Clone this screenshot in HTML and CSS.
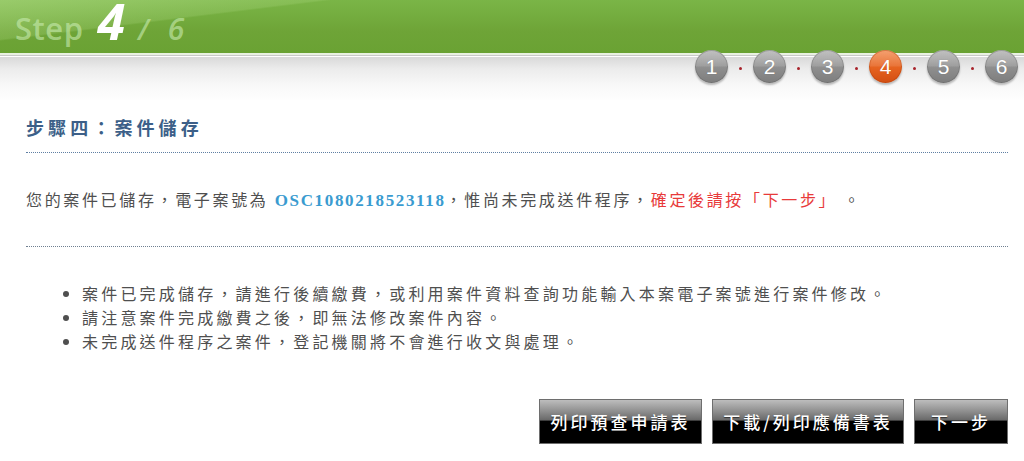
FILE: index.html
```html
<!DOCTYPE html>
<html lang="zh-Hant">
<head>
<meta charset="utf-8">
<title>Step 4 / 6</title>
<link rel="stylesheet" href="styles.css">
</head>
<body>
<header class="top">
  <div class="band">
    <div class="step-title">
      <span class="st-word">Step</span>
      <span class="st-cur">4</span>
      <span class="st-sep">/</span>
      <span class="st-total">6</span>
    </div>
  </div>
  <div class="steps">
    <span class="ball">1</span><span class="dot"></span>
    <span class="ball">2</span><span class="dot"></span>
    <span class="ball">3</span><span class="dot"></span>
    <span class="ball active">4</span><span class="dot"></span>
    <span class="ball">5</span><span class="dot"></span>
    <span class="ball">6</span>
  </div>
</header>
<main class="content">
  <h1 class="heading">步驟四：案件儲存</h1>
  <p class="msg">您的案件已儲存，電子案號為 <span class="case-no">OSC1080218523118</span>，惟尚未完成送件程序，<span class="warn">確定後請按「下一步」</span> 。</p>
  <ul class="notes">
    <li>案件已完成儲存，請進行後續繳費，或利用案件資料查詢功能輸入本案電子案號進行案件修改。</li>
    <li>請注意案件完成繳費之後，即無法修改案件內容。</li>
    <li>未完成送件程序之案件，登記機關將不會進行收文與處理。</li>
  </ul>
  <div class="actions">
    <button class="btn b1">列印預查申請表</button>
    <button class="btn b2">下載/列印應備書表</button>
    <button class="btn b3">下一步</button>
  </div>
</main>
</body>
</html>
```
FILE: styles.css
```css
* { box-sizing: border-box; }
html, body { margin: 0; padding: 0; background: #fff; }
body {
  width: 1024px;
  height: 461px;
  overflow: hidden;
  font-family: "Noto Sans CJK TC", "Noto Sans", sans-serif;
}
.top {
  height: 100px;
  display: flex;
  flex-direction: column;
  background:
    linear-gradient(180deg, #d9d9d9 0px, #ececec 12px, #f8f8f8 28px, #ffffff 45px) 0 57px / 100% 45px no-repeat,
    #fff;
}
.band {
  height: 55px;
  flex: none;
  background:
    linear-gradient(173deg, rgba(190,230,150,0.45) 0%, rgba(190,230,150,0.2) 22%, rgba(255,255,255,0) 23%),
    linear-gradient(180deg, #7ab547 0%, #6ea437 60%, #6aa233 100%);
  border-bottom: 2px solid #e9f1e2;
  box-shadow: 0 1px 0 #c9c9c9;
}
.step-title {
  display: flex;
  align-items: baseline;
  padding-left: 15px;
  font-family: "Open Sans", "DejaVu Sans", sans-serif;
}
.st-word {
  font-size: 31px;
  line-height: 1;
  font-weight: 600;
  color: rgba(200,235,175,0.62);
  letter-spacing: 0.5px;
}
.st-cur {
  font-size: 50px;
  line-height: 42px;
  font-weight: 700;
  font-style: italic;
  color: #fff;
  margin-left: 14px;
}
.st-sep {
  font-size: 28px;
  line-height: 1;
  font-style: italic;
  font-weight: 600;
  color: rgba(200,235,175,0.62);
  margin-left: 13px;
}
.st-total {
  font-size: 30px;
  line-height: 1;
  font-style: italic;
  font-weight: 600;
  color: rgba(200,235,175,0.62);
  margin-left: 19px;
}
.steps {
  display: flex;
  align-items: center;
  justify-content: flex-end;
  padding-right: 6px;
  margin-top: -5px;
  height: 33px;
}
.ball {
  width: 33px;
  height: 33px;
  border-radius: 50%;
  display: flex;
  align-items: center;
  justify-content: center;
  font-family: "Liberation Sans", Arial, sans-serif;
  font-size: 21px;
  color: #fff;
  background:
    linear-gradient(180deg, rgba(255,255,255,0.28) 0%, rgba(255,255,255,0.12) 48%, rgba(0,0,0,0) 52%),
    linear-gradient(180deg, #a9a9a9 0%, #8e8e8e 55%, #7d7d7d 100%);
  box-shadow: 0 2px 2px rgba(0,0,0,0.25), inset 0 0 0 1px rgba(90,90,90,0.35);
  text-shadow: 0 0 1px rgba(0,0,0,0.2);
}
.ball.active {
  background:
    linear-gradient(180deg, rgba(255,255,255,0.25) 0%, rgba(255,255,255,0.1) 48%, rgba(0,0,0,0) 52%),
    linear-gradient(180deg, #f08040 0%, #e5621f 55%, #d24e12 100%);
  box-shadow: 0 2px 2px rgba(0,0,0,0.25), inset 0 0 0 1px rgba(170,60,10,0.4);
}
.dot {
  width: 3px;
  height: 3px;
  border-radius: 50%;
  background: #a8232b;
  margin: 4px 11px 0 11px;
}
.content {
  padding: 0 16px 0 26px;
  color: #555;
}
.heading {
  margin: 0;
  padding: 14px 0 12px;
  line-height: 26px;
  font-size: 18px;
  font-weight: 700;
  letter-spacing: 4.1px;
  color: #3c5f88;
  border-bottom: 1px dotted #5f7fa3;
}
.msg {
  margin: 0;
  padding: 34px 0 33px;
  line-height: 24px;
  font-size: 16px;
  letter-spacing: 2.65px;
  color: #4f4f4f;
  border-bottom: 1px dotted #6f7f90;
}
.case-no {
  font-family: "Liberation Serif", "Times New Roman", serif;
  font-weight: 700;
  font-size: 17px;
  letter-spacing: 1.65px;
  color: #3a9bd0;
}
.warn {
  color: #e83a3a;
}
.notes {
  margin: 34px 0 0;
  padding: 0 0 0 56px;
  font-size: 16px;
  line-height: 24px;
  letter-spacing: 3.2px;
  color: #4f4f4f;
}
.actions {
  display: flex;
  justify-content: flex-end;
  gap: 10px;
  margin-top: 46px;
}
.btn {
  height: 45px;
  padding: 0;
  border: 1px solid #6e6e6e;
  background: linear-gradient(180deg, #bdbdbd 0%, #9a9a9a 20%, #6a6a6a 46%, #000 50%, #000 100%);
  color: #fff;
  font-family: "Noto Sans CJK TC", "Noto Sans", sans-serif;
  font-size: 17px;
  font-weight: 500;
  letter-spacing: 3px;
  text-shadow: 0 1px 1px rgba(0,0,0,0.6);
  cursor: pointer;
  line-height: 43px;
}
.b1 { width: 163px; }
.b2 { width: 192px; }
.b3 { width: 94px; }
```
